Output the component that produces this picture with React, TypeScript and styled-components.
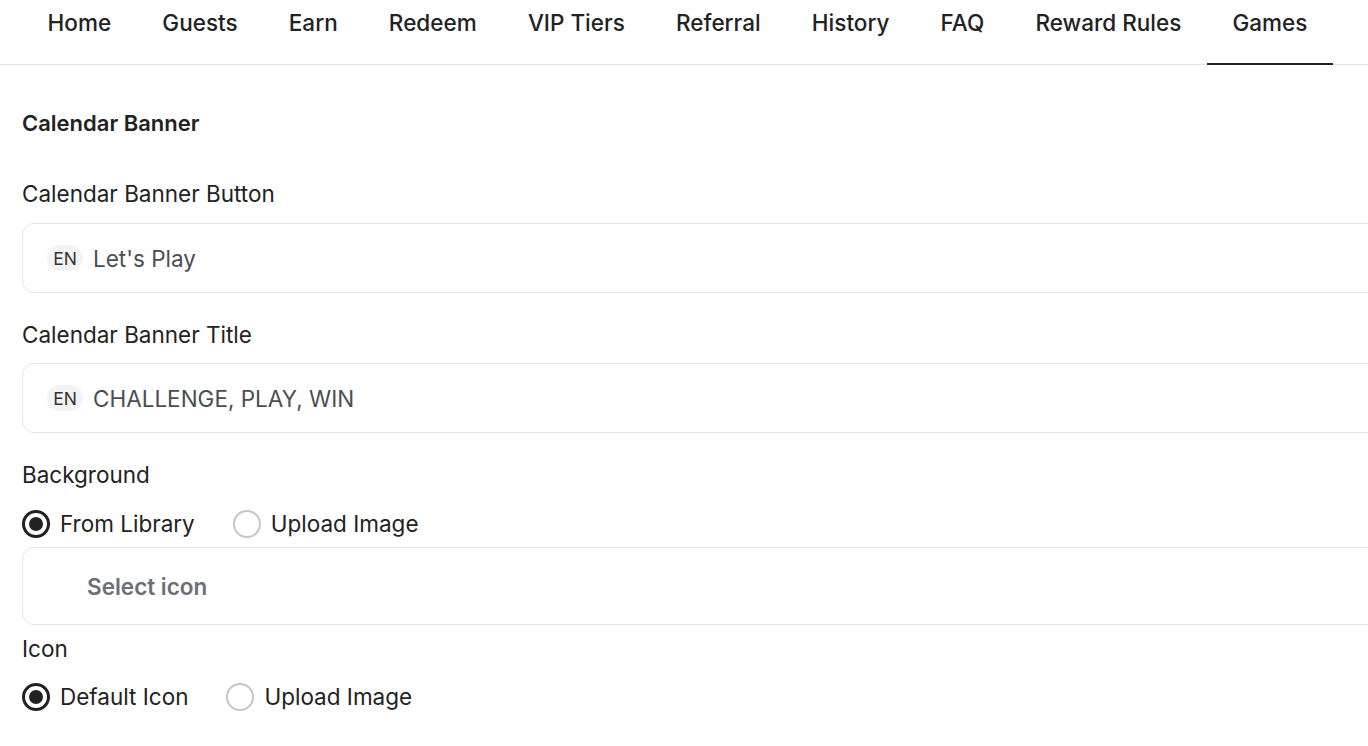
import React from "react";
import styled, { createGlobalStyle } from "styled-components";

const Global = createGlobalStyle`
  html, body { margin: 0; padding: 0; background: #fff; overflow: hidden; }
  body { font-family: Inter, "Noto Sans", sans-serif; color: #222; }
  * { box-sizing: border-box; }
`;

const Page = styled.div`
  width: 1368px;
  height: 746px;
  overflow: hidden;
`;

const Nav = styled.nav`
  display: flex;
  height: 65px;
  padding-left: 22px;
  border-bottom: 1px solid #e4e4e4;
`;

const Tab = styled.div<{ $active?: boolean }>`
  height: 65px;
  margin-bottom: -1px;
  padding: 9px 25.6px 0;
  font-size: 22.5px;
  line-height: 28px;
  font-weight: 500;
  color: #222;
  white-space: nowrap;
  border-bottom: 2px solid ${(p) => (p.$active ? "#222" : "transparent")};
`;

const Content = styled.div`
  display: flex;
  flex-direction: column;
  width: 1400px;
  padding-left: 22px;
`;

const Heading = styled.h2`
  margin: 44px 0 0;
  font-size: 22px;
  line-height: 28px;
  font-weight: 600;
  color: #222;
`;

const Label = styled.div<{ $top: number }>`
  margin-top: ${(p) => p.$top}px;
  font-size: 22.5px;
  line-height: 28px;
  font-weight: 400;
  color: #222;
`;

const InputBox = styled.div<{ $top: number }>`
  margin-top: ${(p) => p.$top}px;
  height: 70px;
  display: flex;
  align-items: center;
  gap: 10px;
  padding-left: 24px;
  border: 1px solid #e6e6e6;
  border-radius: 12px;
`;

const Badge = styled.span`
  display: inline-flex;
  align-items: center;
  justify-content: center;
  width: 36px;
  height: 26px;
  border-radius: 13px;
  background: #f3f3f4;
  font-size: 17.5px;
  color: #333;
`;

const Value = styled.span`
  font-size: 22.5px;
  color: #4a4e54;
`;

const RadioRow = styled.div<{ $top: number }>`
  margin-top: ${(p) => p.$top}px;
  display: flex;
  align-items: center;
  gap: 38px;
  height: 28px;
`;

const RadioOption = styled.label`
  display: flex;
  align-items: center;
  gap: 10px;
  font-size: 22.5px;
  line-height: 28px;
  color: #222;
`;

const RadioCircle = styled.span<{ $checked?: boolean }>`
  width: 28px;
  height: 28px;
  border-radius: 50%;
  display: flex;
  align-items: center;
  justify-content: center;
  border: ${(p) => (p.$checked ? "3px solid #222" : "2px solid #c3c6ca")};
  &::after {
    content: "";
    display: ${(p) => (p.$checked ? "block" : "none")};
    width: 14px;
    height: 14px;
    border-radius: 50%;
    background: #222;
  }
`;

const SelectBox = styled.div`
  margin-top: 9px;
  height: 78px;
  display: flex;
  align-items: center;
  padding-left: 64px;
  border: 1px solid #e6e6e6;
  border-radius: 12px;
  font-size: 22.5px;
  font-weight: 600;
  color: #6b7077;
`;

const tabs = ["Home", "Guests", "Earn", "Redeem", "VIP Tiers", "Referral", "History", "FAQ", "Reward Rules", "Games"];

const Radio = ({ checked, label }: { checked?: boolean; label: string }) => (
  <RadioOption>
    <RadioCircle $checked={checked} />
    {label}
  </RadioOption>
);

export default function App() {
  return (
    <Page>
      <Global />
      <Nav>
        {tabs.map((t) => (
          <Tab key={t} $active={t === "Games"}>{t}</Tab>
        ))}
      </Nav>
      <Content>
        <Heading>Calendar Banner</Heading>
        <Label $top={43}>Calendar Banner Button</Label>
        <InputBox $top={15}>
          <Badge>EN</Badge>
          <Value>Let's Play</Value>
        </InputBox>
        <Label $top={28}>Calendar Banner Title</Label>
        <InputBox $top={14}>
          <Badge>EN</Badge>
          <Value>CHALLENGE, PLAY, WIN</Value>
        </InputBox>
        <Label $top={28}>Background</Label>
        <RadioRow $top={21}>
          <Radio checked label="From Library" />
          <Radio label="Upload Image" />
        </RadioRow>
        <SelectBox>Select icon</SelectBox>
        <Label $top={10}>Icon</Label>
        <RadioRow $top={20}>
          <Radio checked label="Default Icon" />
          <Radio label="Upload Image" />
        </RadioRow>
      </Content>
    </Page>
  );
}
